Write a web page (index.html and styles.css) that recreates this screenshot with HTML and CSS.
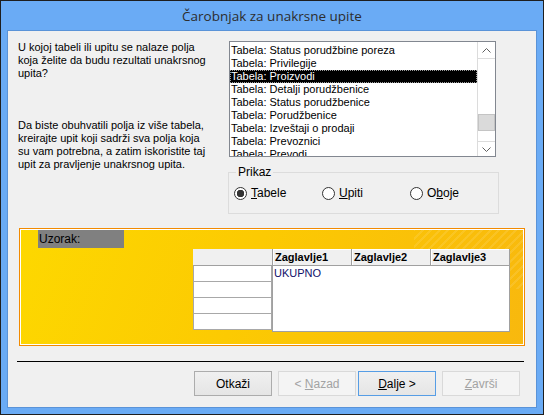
FILE: index.html
```html
<!DOCTYPE html>
<html lang="sr">

<head>
    <meta charset="UTF-8">
    <title>Čarobnjak za unakrsne upite</title>
    <link rel="stylesheet" href="styles.css">
</head>

<body>
    <div class="window">
        <div class="title-bar">Čarobnjak za unakrsne upite</div>
        <div class="client">
            <div class="top">
                <!-- explanation on the left -->
                <div class="intro">
                    <p>U kojoj tabeli ili upitu se nalaze polja<br>koja želite da budu rezultati unakrsnog<br>upita?</p>
                    <p>Da biste obuhvatili polja iz više tabela,<br>kreirajte upit koji sadrži sva polja koja<br>su vam potrebna, a zatim iskoristite taj<br>upit za pravljenje unakrsnog upita.</p>
                </div>
                <!-- table/query picker -->
                <div class="picker">
                    <div class="listbox">
                        <ul class="items">
                            <li>Tabela: Status porudžbine poreza</li>
                            <li>Tabela: Privilegije</li>
                            <li class="selected">Tabela: Proizvodi</li>
                            <li>Tabela: Detalji porudžbenice</li>
                            <li>Tabela: Status porudžbenice</li>
                            <li>Tabela: Porudžbenice</li>
                            <li>Tabela: Izveštaji o prodaji</li>
                            <li>Tabela: Prevoznici</li>
                            <li>Tabela: Prevodi</li>
                        </ul>
                        <div class="scrollbar">
                            <div class="arrow up">
                                <svg width="9" height="5" viewBox="0 0 9 5"><polyline points="0.5,4.5 4.5,0.5 8.5,4.5" fill="none" stroke="#606060" stroke-width="1"/></svg>
                            </div>
                            <div class="track"><div class="thumb"></div></div>
                            <div class="arrow down">
                                <svg width="9" height="5" viewBox="0 0 9 5"><polyline points="0.5,0.5 4.5,4.5 8.5,0.5" fill="none" stroke="#606060" stroke-width="1"/></svg>
                            </div>
                        </div>
                    </div>
                    <fieldset class="view-group">
                        <legend>Prikaz</legend>
                        <label class="radio"><span class="dot on"></span><span><u>T</u>abele</span></label>
                        <label class="radio"><span class="dot"></span><span><u>U</u>piti</span></label>
                        <label class="radio"><span class="dot"></span><span>O<u>b</u>oje</span></label>
                    </fieldset>
                </div>
            </div>

            <!-- sample preview -->
            <div class="sample">
                <div class="sample-label">Uzorak:</div>
                <div class="grid">
                    <div class="row-heads">
                        <div class="corner"></div>
                        <div class="row-head"></div>
                        <div class="row-head"></div>
                        <div class="row-head"></div>
                        <div class="row-head"></div>
                    </div>
                    <div class="main-grid">
                        <div class="heads">
                            <div class="head">Zaglavlje1</div>
                            <div class="head">Zaglavlje2</div>
                            <div class="head">Zaglavlje3</div>
                        </div>
                        <div class="total">UKUPNO</div>
                    </div>
                </div>
            </div>

            <hr class="separator">

            <div class="buttons">
                <button class="btn">Otkaži</button>
                <div class="nav">
                    <button class="btn" disabled>&lt; <u>N</u>azad</button>
                    <button class="btn default"><u>D</u>alje &gt;</button>
                </div>
                <button class="btn" disabled><u>Z</u>avrši</button>
            </div>
        </div>
    </div>
</body>

</html>
```

FILE: styles.css
```css
/* dialog window */
body {
    margin: 0;
    font-family: "Liberation Sans", Arial, sans-serif;
    color: #000;
}

.window {
    width: 544px;
    height: 415px;
    box-sizing: border-box;
    border: 1px solid #1e1e1e;
    background-color: #6aabf5;
    padding: 0 6px 6px;
    display: flex;
    flex-direction: column;
}

.title-bar {
    height: 29px;
    display: flex;
    align-items: center;
    justify-content: center;
    font-family: "Open Sans", sans-serif;
    font-size: 13.5px;
    color: #2d2d2d;
}

.client {
    flex: 1;
    border: 1px solid #5a93d8;
    background-color: #f0f0f0;
    display: flex;
    flex-direction: column;
}

.top {
    display: flex;
    padding: 10px 0 0 10px;
}

.intro {
    width: 211px;
    font-size: 11px;
    line-height: 13px;
}

.intro p {
    margin: 0 0 39px;
    white-space: nowrap;
}

.picker {
    width: 267px;
}

/* list box */
.listbox {
    height: 116px;
    box-sizing: border-box;
    border: 1px solid #828790;
    background-color: white;
    display: flex;
}

.items {
    list-style: none;
    margin: 0;
    padding: 2px 0 0;
    flex: 1;
    overflow: hidden;
    font-size: 11px;
}

.items li {
    height: 13px;
    line-height: 13px;
    padding-left: 1px;
    white-space: nowrap;
}

.items li.selected {
    background-color: black;
    color: white;
    outline: 1px dotted #9a9a9a;
    outline-offset: -1px;
}

.scrollbar {
    width: 17px;
    border-left: 1px solid #dcdcdc;
    display: flex;
    flex-direction: column;
}

.arrow {
    display: flex;
    align-items: center;
    justify-content: center;
}

.arrow.up {
    height: 16px;
    border-bottom: 1px solid #dcdcdc;
}

.arrow.down {
    height: 14px;
    border-top: 1px solid #dcdcdc;
}

.track {
    flex: 1;
}

.thumb {
    margin-top: 55px;
    height: 17px;
    box-sizing: border-box;
    background-color: #dadada;
    border: 1px solid #c4c4c4;
}

/* Prikaz group */
.view-group {
    margin: 9px 0 0 -1px;
    padding: 8px 0 13px 5px;
    border: 1px solid #dcdcdc;
    display: flex;
    font-size: 12px;
}

.view-group legend {
    padding: 0 2px;
    margin-left: 2px;
    line-height: 13px;
}

.radio {
    width: 88px;
    display: flex;
    align-items: center;
    gap: 4px;
    line-height: 13px;
}

.dot {
    width: 13px;
    height: 13px;
    box-sizing: border-box;
    border: 1px solid #333;
    border-radius: 50%;
    background-color: white;
}

.dot.on {
    background: radial-gradient(circle, #333 0 3.5px, white 4px);
}

/* sample preview */
.sample {
    margin: 14px 0 0 11px;
    width: 506px;
    height: 118px;
    box-sizing: border-box;
    border: 1px solid #f28a00;
    box-shadow: inset 0 0 0 1px white;
    padding: 1px 0 0 18px;
    background:
        repeating-linear-gradient(135deg, rgba(255, 255, 255, 0.10) 0 2px, transparent 2px 6px) right top / 110px 60px no-repeat,
        linear-gradient(110deg, #fdd800 0%, #fcca02 45%, #f8b80e 100%);
}

.sample-label {
    width: 86px;
    height: 18px;
    box-sizing: border-box;
    padding-left: 1px;
    background-color: #808080;
    font-size: 12px;
    line-height: 18px;
}

.grid {
    display: flex;
    margin: 1px 0 0 155px;
}

.row-heads {
    width: 79px;
}

.corner {
    height: 16px;
    background-color: #f0f0f0;
    border-bottom: 1px solid #a0a0a0;
}

.row-head {
    height: 15px;
    background-color: white;
    border: 1px solid #a8a8a8;
    border-top: none;
}

.main-grid {
    width: 238px;
    height: 83px;
    box-sizing: border-box;
    background-color: white;
    border: 1px solid #a0a0a0;
    border-top: none;
}

.heads {
    display: flex;
}

.head {
    flex: 1;
    height: 16px;
    padding-left: 2px;
    background-color: #f0f0f0;
    border-right: 1px solid #a0a0a0;
    border-bottom: 1px solid #a0a0a0;
    box-shadow: inset 1px 1px white;
    font-size: 11px;
    font-weight: bold;
    line-height: 16px;
}

.head:last-child {
    border-right: none;
}

.total {
    padding: 1px 0 0 1px;
    font-size: 11px;
    line-height: 13px;
    color: #10106a;
}

/* bottom buttons */
.separator {
    margin: 15px 0 0 9px;
    width: 507px;
    height: 0;
    border: none;
    border-top: 1px solid black;
}

.buttons {
    display: flex;
    justify-content: flex-end;
    gap: 6px;
    padding: 9px 16px 0 0;
}

.nav {
    display: flex;
    gap: 2px;
}

.btn {
    width: 78px;
    height: 25px;
    margin: 0;
    padding: 0;
    font-family: "Liberation Sans", Arial, sans-serif;
    font-size: 12px;
    color: black;
    background: linear-gradient(#f0f0f0, #e5e5e5);
    border: 1px solid #acacac;
    border-radius: 0;
}

.btn:disabled {
    color: #a3a3a3;
    background: #f4f4f4;
    border-color: #d9d9d9;
}

.btn.default {
    border-color: #569de5;
}
```
